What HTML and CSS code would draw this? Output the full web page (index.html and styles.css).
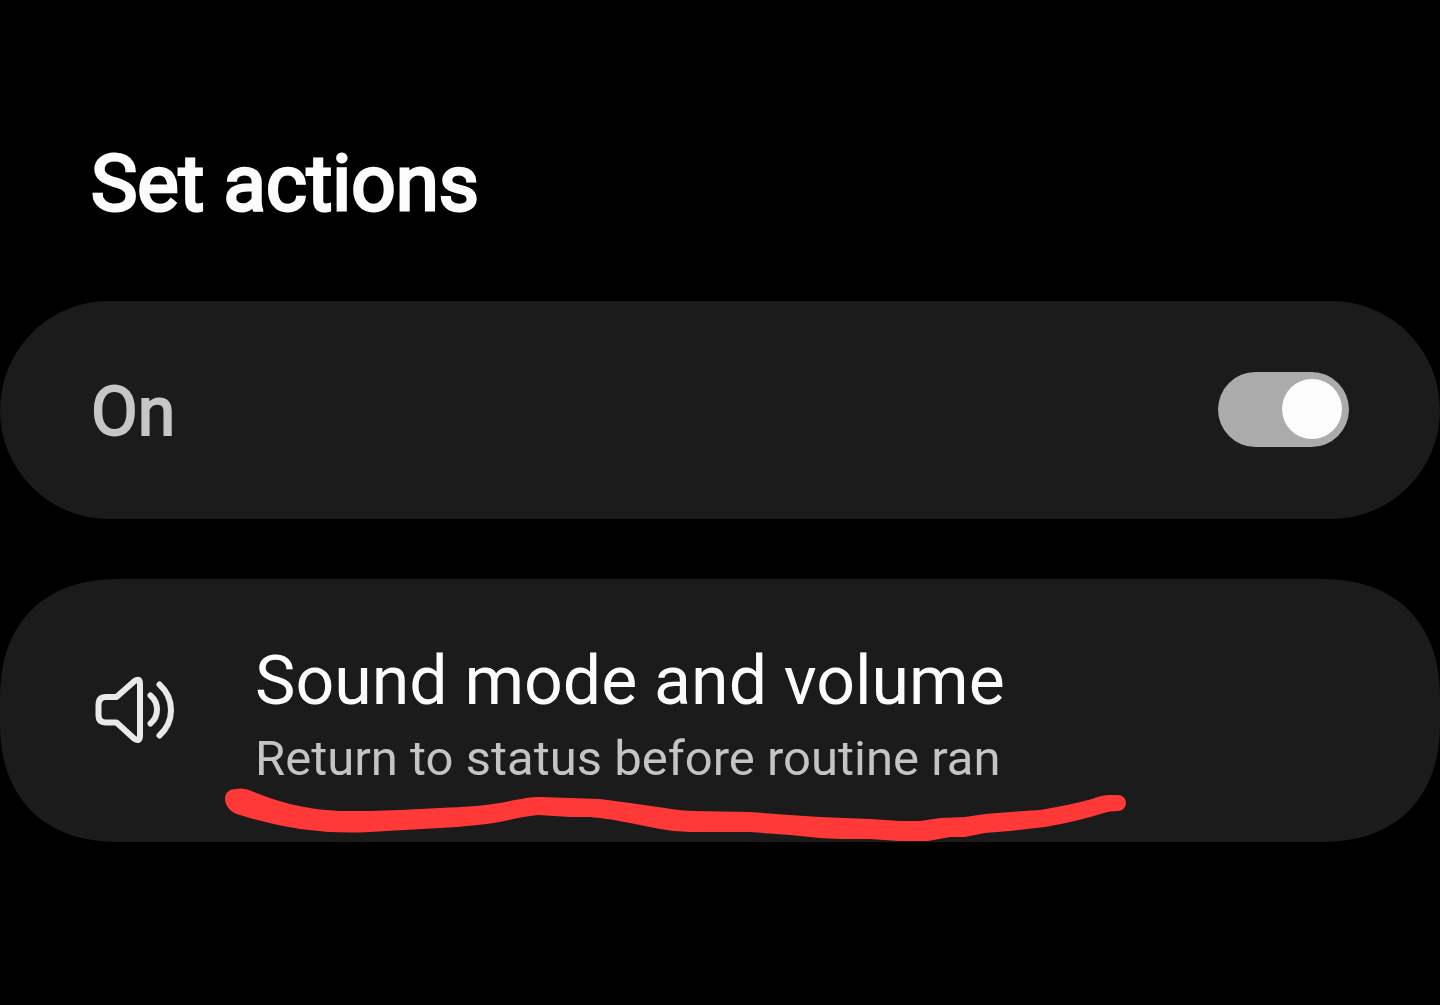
FILE: index.html
```
<!DOCTYPE html>
<html lang="en">

<head>
	<meta charset="UTF-8">
	<meta name="viewport" content="width=device-width, initial-scale=1.0">
	<title>Set actions</title>

	<link rel="stylesheet" href="styles.css">
</head>

<body>
	<main class="container">
		<h1 class="title">Set actions</h1>

		<div class="card card-switch">
			<label for="routine" class="switch-label">On</label>
			<input type="checkbox" id="routine" class="switch" checked>
		</div>

		<div class="card card-action">
			<svg class="icon" viewBox="-1 4 84 84" aria-hidden="true">
				<path d="M14 28H24.500L42 12.500Q48 8 48 14.500V66.500Q48 73.500 42 69.500L24.500 53.500H14Q6.500 53.500 6.500 46V36Q6.500 28 14 28Z" />
				<path d="M58.500 26.500Q65 32 65 40.500T58.500 54.500" />
				<path d="M67.500 15.500Q79 26 79 41T67.500 66.500" />
			</svg>
			<div class="text">
				<h2 class="name">Sound mode and volume</h2>
				<p class="desc">Return to status before routine ran</p>
			</div>
			<!-- hand drawn underline -->
			<svg class="marker" viewBox="225 787 902 55" aria-hidden="true">
				<path d="M225 799C225 792 230 789 236 789Q245 787 254 792C266 797 278 801 290 804C312 809 330 811 345 811H370L400 810L440 808C465 807 480 806 500 803C520 799 530 797 540 797L600 799L630 803L665 808Q682 811 695 811L750 812L790 815L820 817L870 819L900 821H920L940 818L965 817L985 814L1010 812L1040 810Q1070 805 1092 799Q1102 795 1110 795H1118A8 8 0 0 1 1118 811Q1109 811 1104 813Q1075 822 1045 827L1010 831L985 833L965 837L950 837L928 841L898 841L870 839L840 839L820 838L790 835L750 832H690Q675 832 660 829L630 823C610 819 600 818 590 817L570 817L538 815Q525 816 500 822Q475 826 440 828L370 832Q335 834 300 829C275 825 260 821 240 815C231 813 225 806 225 799Z" />
			</svg>
		</div>
	</main>
</body>

</html>
```

FILE: styles.css
```
* {
	box-sizing: border-box;
}

body {
	margin: 0;
	background-color: #000;
	color: #fcfcfc;
	font-family: Roboto, "Liberation Sans", sans-serif;
}

.container {
	padding: 138px 0;
}

.title {
	margin: 0 91px 71px;
	font-size: 78px;
	line-height: 92px;
	font-weight: 400;
	-webkit-text-stroke: 3px #fcfcfc;
}

.card {
	position: relative;
	display: flex;
	align-items: center;
	background-color: #1b1b1b;
}

.card-switch {
	align-items: flex-start;
	justify-content: space-between;
	margin-bottom: 60px;
	padding: 71px 91px 67px;
	border-radius: 109px;
}

.switch-label {
	color: #c6c6c6;
	font-size: 68px;
	line-height: 80px;
	-webkit-text-stroke: 2px #c6c6c6;
}

.switch {
	appearance: none;
	display: flex;
	justify-content: flex-end;
	width: 131px;
	height: 75px;
	margin: 0;
	padding: 7px;
	border-radius: 38px;
	background-color: #ababab;
	cursor: pointer;
}

.switch::before {
	content: "";
	width: 60px;
	height: 60px;
	border-radius: 50%;
	background-color: #fcfcfc;
}

.switch:not(:checked) {
	justify-content: flex-start;
}

.card-action {
	gap: 80px;
	padding: 62px 91px 54px;
	border-radius: 120px;
	corner-shape: superellipse(1.2);
}

.icon {
	flex: none;
	width: 84px;
	height: 84px;
	fill: none;
	stroke: #e9e9e9;
	stroke-width: 6;
	stroke-linecap: round;
	stroke-linejoin: round;
}

.name {
	margin: 0 0 9px;
	font-size: 68px;
	line-height: 80px;
	font-weight: 400;
}

.desc {
	margin: 0;
	color: #c4c4c4;
	font-size: 49px;
	line-height: 58px;
}

.marker {
	position: absolute;
	left: 225px;
	bottom: 0;
	width: 902px;
	height: 55px;
	fill: #ff3838;
}
```
